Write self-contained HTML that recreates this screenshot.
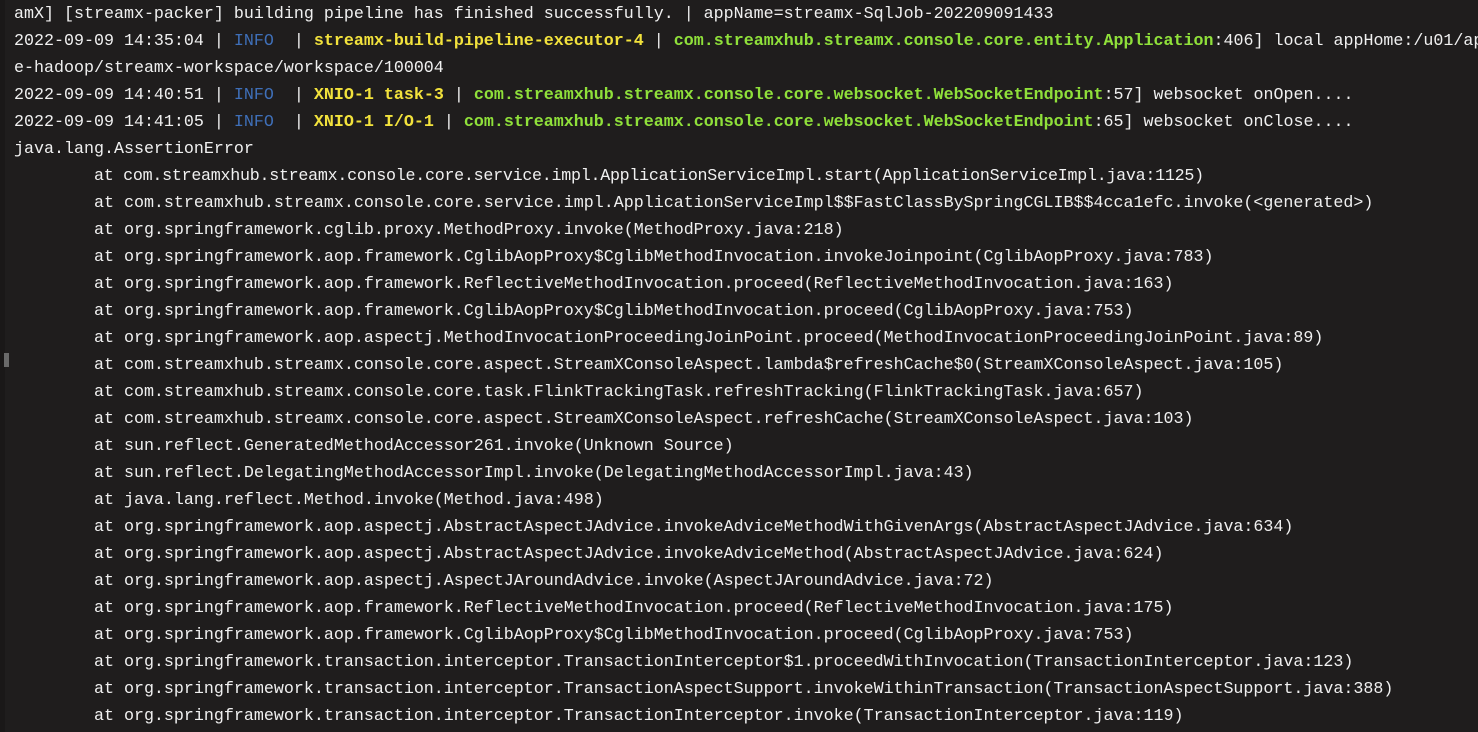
<!DOCTYPE html>
<html><head><meta charset="utf-8"><style>
html,body{margin:0;padding:0;width:1478px;height:732px;overflow:hidden;background:#1f1d1d;}
.bar{position:absolute;left:0;top:0;width:5px;height:732px;background:#1a1818;}
.grip{position:absolute;left:4px;top:353px;width:5px;height:14px;background:#6a6a6a;}
pre{position:absolute;left:14px;top:1px;margin:0;font-family:"Liberation Mono",monospace;font-size:16.67px;line-height:27px;color:#f0f0f0;white-space:pre;}
.i{color:#3f6fb8}.y{color:#f2e23c;font-weight:bold}.g{color:#8fe03a;font-weight:bold}
.n{letter-spacing:-0.26px}
</style></head><body><div class="bar"></div><div class="grip"></div>
<pre>amX] [streamx-packer] building pipeline has finished successfully. | appName=streamx-SqlJob-202209091433
2022-09-09 14:35:04 | <span class="i">INFO </span> | <span class="y">streamx-build-pipeline-executor-4</span> | <span class="g">com.streamxhub.streamx.console.core.entity.Application</span>:406] local appHome:/u01/ap
e-hadoop/streamx-workspace/workspace/100004
2022-09-09 14:40:51 | <span class="i">INFO </span> | <span class="y">XNIO-1 task-3</span> | <span class="g">com.streamxhub.streamx.console.core.websocket.WebSocketEndpoint</span>:57] websocket onOpen....
2022-09-09 14:41:05 | <span class="i">INFO </span> | <span class="y">XNIO-1 I/O-1</span> | <span class="g">com.streamxhub.streamx.console.core.websocket.WebSocketEndpoint</span>:65] websocket onClose....
java.lang.AssertionError
        <span class="n">at com.streamxhub.streamx.console.core.service.impl.ApplicationServiceImpl.start(ApplicationServiceImpl.java:1125)</span>
        at com.streamxhub.streamx.console.core.service.impl.ApplicationServiceImpl$$FastClassBySpringCGLIB$$4cca1efc.invoke(&lt;generated&gt;)
        at org.springframework.cglib.proxy.MethodProxy.invoke(MethodProxy.java:218)
        at org.springframework.aop.framework.CglibAopProxy$CglibMethodInvocation.invokeJoinpoint(CglibAopProxy.java:783)
        at org.springframework.aop.framework.ReflectiveMethodInvocation.proceed(ReflectiveMethodInvocation.java:163)
        at org.springframework.aop.framework.CglibAopProxy$CglibMethodInvocation.proceed(CglibAopProxy.java:753)
        at org.springframework.aop.aspectj.MethodInvocationProceedingJoinPoint.proceed(MethodInvocationProceedingJoinPoint.java:89)
        at com.streamxhub.streamx.console.core.aspect.StreamXConsoleAspect.lambda$refreshCache$0(StreamXConsoleAspect.java:105)
        at com.streamxhub.streamx.console.core.task.FlinkTrackingTask.refreshTracking(FlinkTrackingTask.java:657)
        at com.streamxhub.streamx.console.core.aspect.StreamXConsoleAspect.refreshCache(StreamXConsoleAspect.java:103)
        at sun.reflect.GeneratedMethodAccessor261.invoke(Unknown Source)
        at sun.reflect.DelegatingMethodAccessorImpl.invoke(DelegatingMethodAccessorImpl.java:43)
        at java.lang.reflect.Method.invoke(Method.java:498)
        at org.springframework.aop.aspectj.AbstractAspectJAdvice.invokeAdviceMethodWithGivenArgs(AbstractAspectJAdvice.java:634)
        at org.springframework.aop.aspectj.AbstractAspectJAdvice.invokeAdviceMethod(AbstractAspectJAdvice.java:624)
        at org.springframework.aop.aspectj.AspectJAroundAdvice.invoke(AspectJAroundAdvice.java:72)
        at org.springframework.aop.framework.ReflectiveMethodInvocation.proceed(ReflectiveMethodInvocation.java:175)
        at org.springframework.aop.framework.CglibAopProxy$CglibMethodInvocation.proceed(CglibAopProxy.java:753)
        at org.springframework.transaction.interceptor.TransactionInterceptor$1.proceedWithInvocation(TransactionInterceptor.java:123)
        at org.springframework.transaction.interceptor.TransactionAspectSupport.invokeWithinTransaction(TransactionAspectSupport.java:388)
        at org.springframework.transaction.interceptor.TransactionInterceptor.invoke(TransactionInterceptor.java:119)</pre>
</body></html>
